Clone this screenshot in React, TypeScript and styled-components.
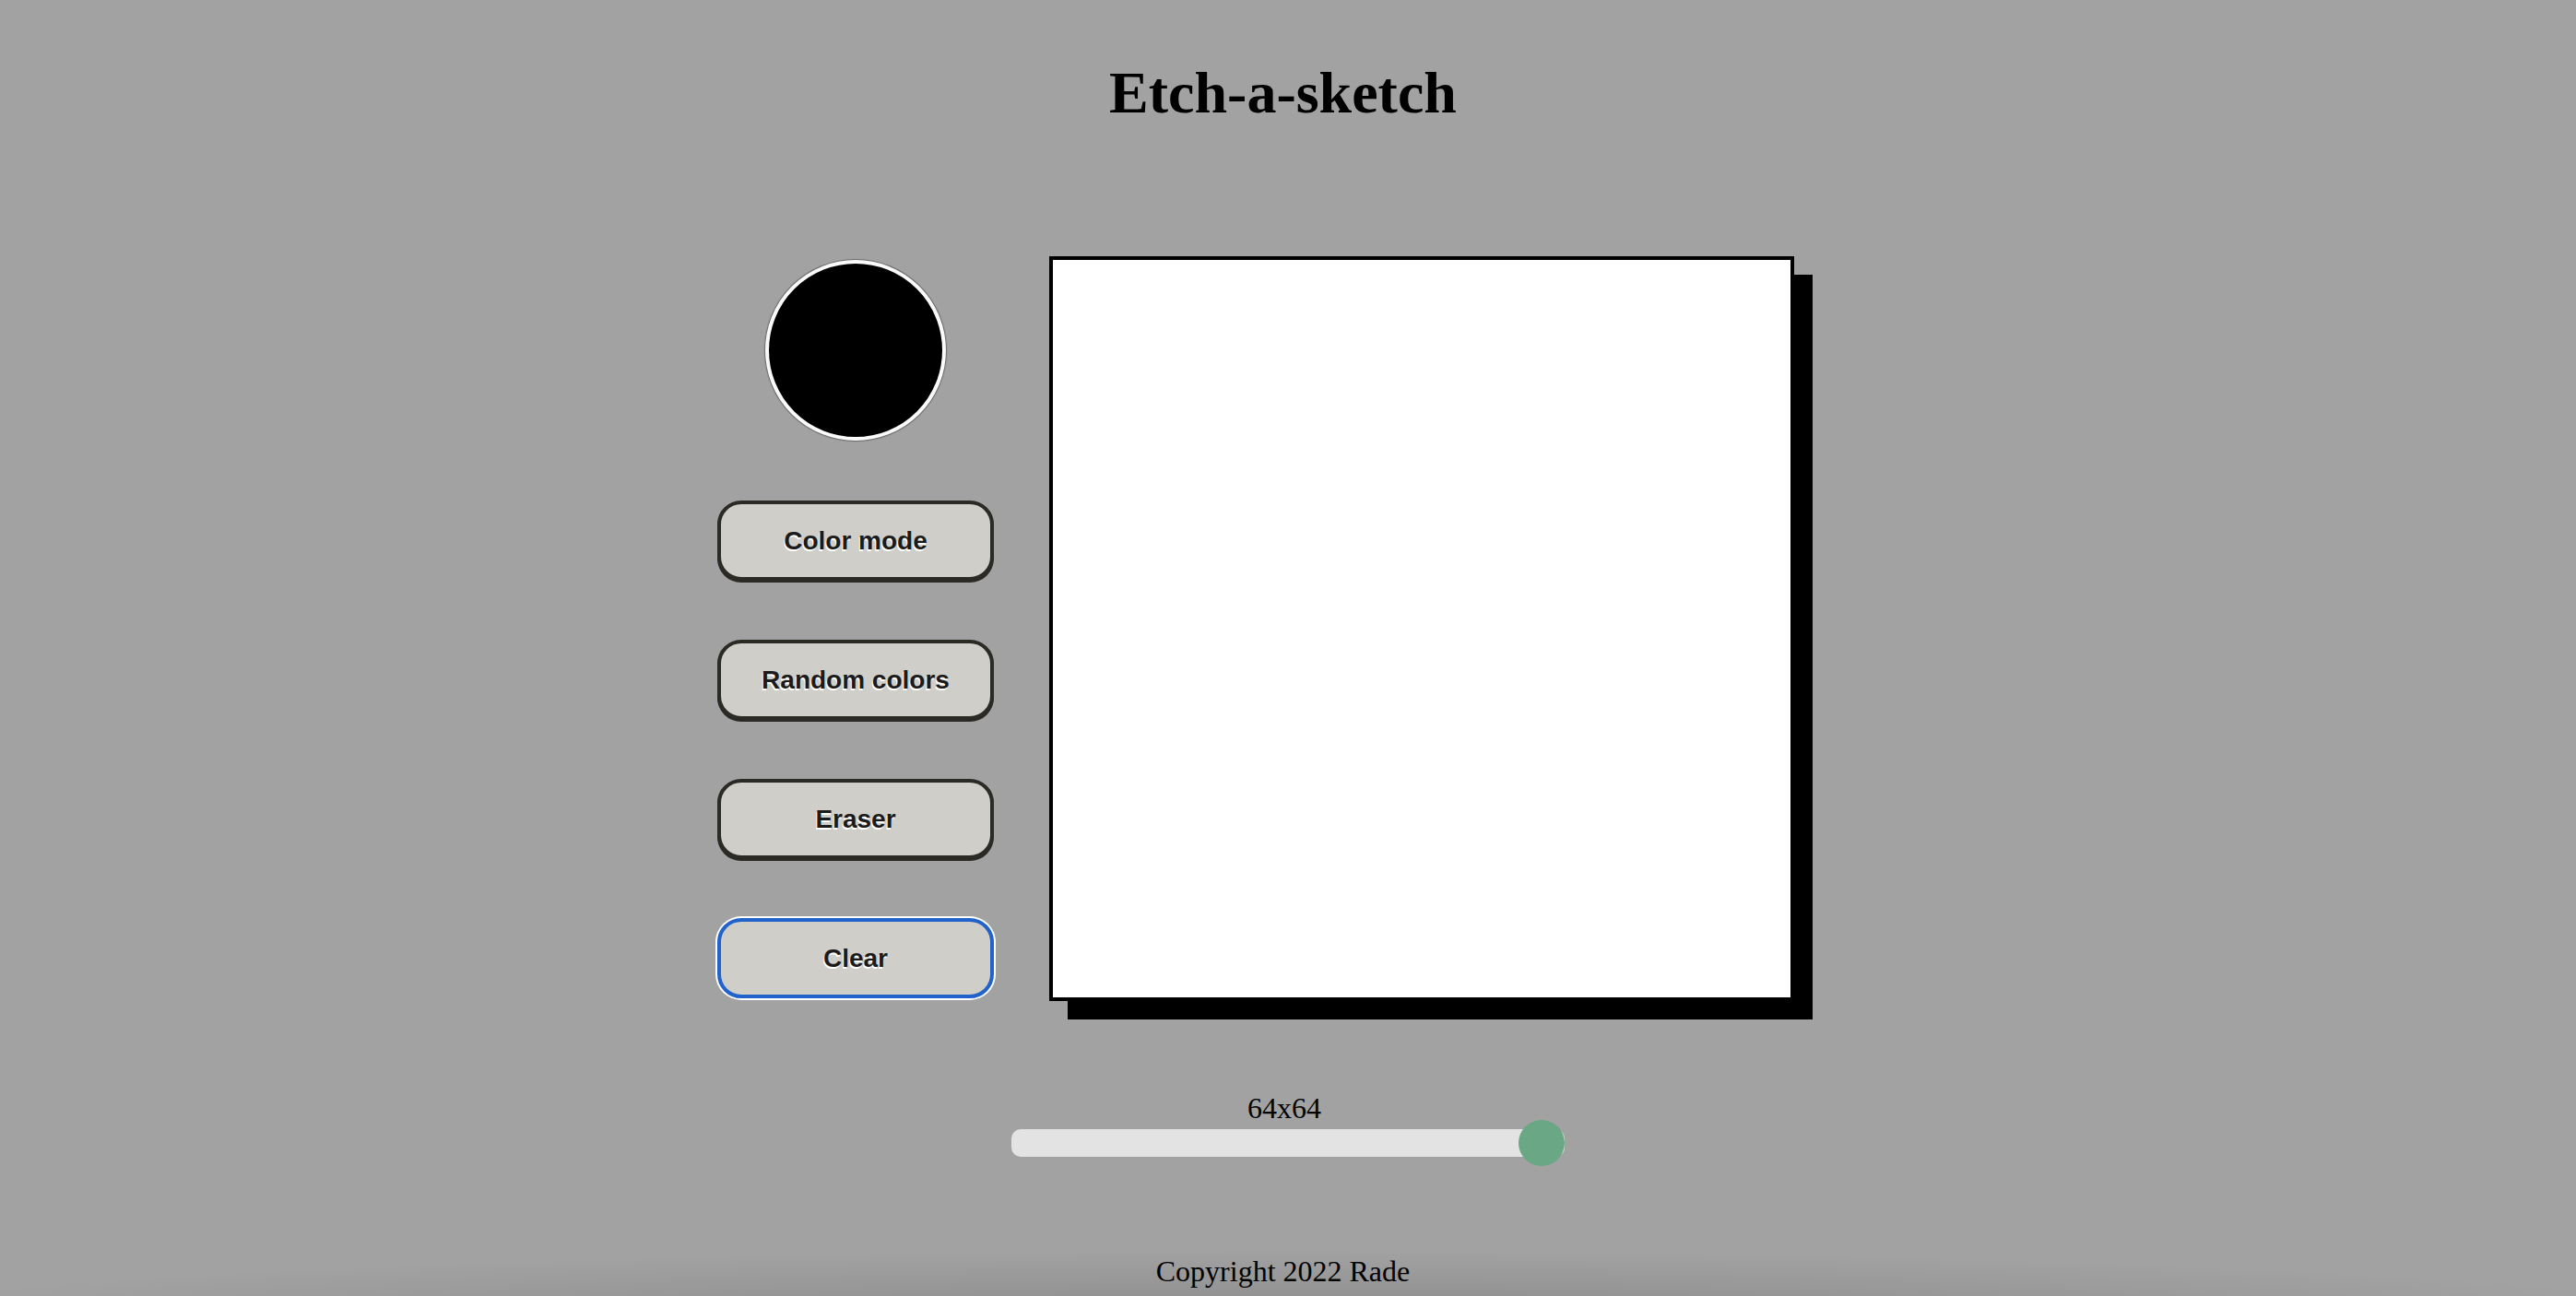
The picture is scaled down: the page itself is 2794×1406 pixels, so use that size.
import { useState } from "react";
import styled, { createGlobalStyle } from "styled-components";

const GlobalStyle = createGlobalStyle`
  html, body {
    margin: 0;
    padding: 0;
    background: #a2a2a2;
    font-family: "Liberation Serif", "Times New Roman", serif;
  }
`;

const Page = styled.div`
  min-height: 100vh;
  display: flex;
  flex-direction: column;
  align-items: center;
  padding-top: 64px;
  box-sizing: border-box;
`;

const Title = styled.h1`
  margin: 0;
  padding-right: 11px;
  font-size: 64px;
  font-weight: 700;
  color: #000;
`;

const Main = styled.div`
  display: flex;
  align-items: flex-start;
  gap: 60px;
  margin-top: 140px;
  padding-right: 70px;
`;

const Controls = styled.div`
  width: 300px;
  display: flex;
  flex-direction: column;
  align-items: center;
  gap: 64px;
  padding-top: 4px;
`;

const Swatch = styled.div<{ $color: string }>`
  width: 188px;
  height: 188px;
  border-radius: 50%;
  background: ${(p) => p.$color};
  border: 4px solid #fafafa;
  box-shadow: 0 0 1px 1px rgba(0, 0, 0, 0.35);
  margin-bottom: 1px;
`;

const ModeButton = styled.button<{ $focused?: boolean }>`
  width: 300px;
  height: 87px;
  box-sizing: border-box;
  border-radius: 26px;
  border: 4px solid ${(p) => (p.$focused ? "#2262cb" : "#2b2a25")};
  background: #cfcec9;
  box-shadow: ${(p) =>
    p.$focused ? "0 0 0 2px #ffffff" : "0 2px 0 #2b2a25"};
  font-family: "Liberation Sans", Arial, sans-serif;
  font-size: 28px;
  font-weight: 700;
  color: #1b1b1b;
  text-shadow: -1px 2px 0 #ffffff;
  cursor: pointer;
  outline: none;
`;

const Board = styled.div<{ $size: number }>`
  width: 800px;
  height: 800px;
  border: 4px solid #000;
  background: #fff;
  box-shadow: 20px 20px 0 #000;
  display: grid;
  grid-template-columns: repeat(${(p) => p.$size}, 1fr);
  grid-template-rows: repeat(${(p) => p.$size}, 1fr);
`;

const Cell = styled.div`
  background: #fff;
`;

const SizePanel = styled.div`
  display: flex;
  flex-direction: column;
  align-items: center;
  margin-top: 98px;
`;

const SizeLabel = styled.div`
  font-size: 32px;
  color: #000;
  margin-bottom: 4px;
  padding-right: 8px;
`;

const Range = styled.input`
  -webkit-appearance: none;
  appearance: none;
  width: 600px;
  height: 30px;
  margin: 0;
  border-radius: 10px;
  background: #e3e3e3;
  outline: none;

  &::-webkit-slider-thumb {
    -webkit-appearance: none;
    appearance: none;
    width: 50px;
    height: 50px;
    border-radius: 50%;
    background: #6aa784;
    cursor: pointer;
  }
`;

const Footer = styled.footer`
  align-self: stretch;
  margin-top: auto;
  padding: 31px 11px 8px 0;
  text-align: center;
  font-size: 32px;
  color: #000;
  background: radial-gradient(
    ellipse 70% 120% at 50% 130%,
    rgba(0, 0, 0, 0.14),
    rgba(0, 0, 0, 0) 80%
  );
`;

const buttons = ["Color mode", "Random colors", "Eraser", "Clear"];

const App = () => {
  const [size, setSize] = useState(64);
  const [active, setActive] = useState("Clear");
  const [color] = useState("#000000");
  const [painted, setPainted] = useState<Record<number, string>>({});

  const paint = (i: number) => {
    if (active === "Clear") return;
    let c = color;
    if (active === "Eraser") c = "#ffffff";
    if (active === "Random colors")
      c = `hsl(${Math.floor(Math.random() * 360)}, 70%, 55%)`;
    setPainted((prev) => ({ ...prev, [i]: c }));
  };

  return (
    <>
      <GlobalStyle />
      <Page>
        <Title>Etch-a-sketch</Title>
        <Main>
          <Controls>
            <Swatch $color={color} />
            {buttons.map((b) => (
              <ModeButton
                key={b}
                $focused={active === b}
                onClick={() => {
                  setActive(b);
                  if (b === "Clear") setPainted({});
                }}
              >
                {b}
              </ModeButton>
            ))}
          </Controls>
          <Board $size={size}>
            {Array.from({ length: size * size }).map((_, i) => (
              <Cell
                key={i}
                onMouseOver={() => paint(i)}
                style={painted[i] ? { background: painted[i] } : undefined}
              />
            ))}
          </Board>
        </Main>
        <SizePanel>
          <SizeLabel>
            {size}x{size}
          </SizeLabel>
          <Range
            type="range"
            min={1}
            max={64}
            value={size}
            onChange={(e) => {
              setSize(Number(e.target.value));
              setPainted({});
            }}
          />
        </SizePanel>
        <Footer>Copyright 2022 Rade</Footer>
      </Page>
    </>
  );
};

export default App;
